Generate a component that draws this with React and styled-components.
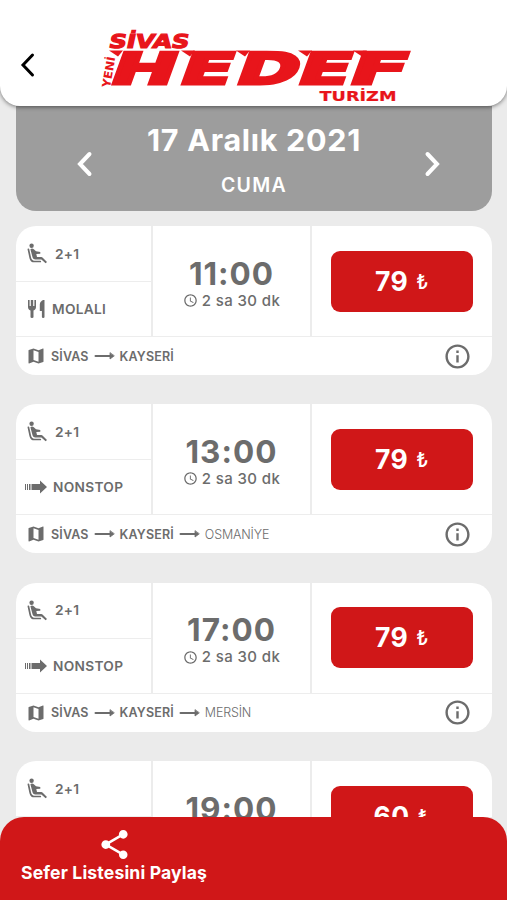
import React from "react";
import styled, { createGlobalStyle } from "styled-components";
import { MdMap, MdAccessTime, MdInfoOutline, MdShare } from "react-icons/md";

const GlobalStyle = createGlobalStyle`
	*{
		box-sizing: border-box;
	}
	body{
		margin: 0;
		background: #ebebeb;
		font-family: Inter, "Liberation Sans", sans-serif;
		color: #6c6c6c;
	}
`

const Screen = styled.div`
	height: 900px;
	overflow: hidden;
	display: flex;
	flex-direction: column;
	background: #ebebeb;
`

const Header = styled.header`
	height: 106px;
	flex: none;
	display: flex;
	align-items: flex-end;
	background: #fff;
	border-radius: 0 0 20px 20px;
	box-shadow: 0 1px 4px rgba(0, 0, 0, 0.5);
	z-index: 1;
`

const BackButton = styled.button`
	display: flex;
	padding: 0;
	margin: 0 0 28px 20px;
	border: none;
	background: none;
	color: #000;
`

const Logo = styled.svg`
	margin: 0 0 3px 62px;
	fill: #e8151b;
	stroke: #e8151b;
	font-family: "DejaVu Sans", sans-serif;
	font-weight: 700;
`

const Content = styled.main`
	flex: 1;
	min-height: 0;
	overflow: hidden;
	padding: 0 15px 0 16px;
`

const DateBar = styled.div`
	height: 105px;
	display: grid;
	grid-template-columns: 16px 1fr 16px;
	align-items: center;
	padding: 10px 52px 0 61px;
	background: #9d9d9d;
	border-radius: 0 0 20px 20px;
	color: #fff;
`

const DateText = styled.div`
	display: grid;
	justify-items: center;
	gap: 15px;
	padding: 0 9px 8px 0;
	h1{
		margin: 0;
		font-size: 30.5px;
		line-height: 36px;
		font-weight: 700;
		letter-spacing: 0.7px;
	}
	h2{
		margin: 0;
		font-size: 19.5px;
		line-height: 24px;
		font-weight: 600;
		letter-spacing: 1.3px;
	}
`

const TripList = styled.div`
	display: grid;
	gap: 29.4px;
	padding-top: 15px;
`

const Card = styled.article`
	height: 149px;
	display: grid;
	grid-template-rows: 111px 1fr;
	background: #fff;
	border-radius: 20px;
	overflow: hidden;
`

const CardTop = styled.div`
	display: grid;
	grid-template-columns: 137px 159px 1fr;
	border-bottom: 1px solid #ededed;
`

const Features = styled.div`
	display: grid;
	grid-template-rows: 56px 1fr;
	border-right: 2px solid #ececec;
`

const Feature = styled.div`
	display: flex;
	align-items: center;
	gap: ${props => props.$wide ? `7px` : `6px`};
	padding-left: ${props => props.$tight ? `9px` : `11px`};
	font-size: 13.7px;
	font-weight: 600;
	letter-spacing: 0.3px;
	&:first-child{
		border-bottom: 1px solid #ededed;
	}
`

const TimeBox = styled.div`
	display: flex;
	flex-direction: column;
	align-items: center;
	justify-content: center;
	padding-top: 5px;
	border-right: 2px solid #ececec;
`

const Time = styled.div`
	font-size: 31.5px;
	line-height: 34px;
	font-weight: 650;
	letter-spacing: 1px;
`

const Duration = styled.div`
	display: flex;
	align-items: center;
	gap: 4px;
	font-size: 15px;
	line-height: 20px;
	font-weight: 500;
	letter-spacing: 0.4px;
`

const PriceBox = styled.div`
	display: flex;
	align-items: center;
	padding-left: 19px;
`

const Price = styled.button`
	display: flex;
	align-items: center;
	justify-content: center;
	gap: 8px;
	width: 142px;
	height: 61px;
	padding: 0 0 1px;
	border: none;
	border-radius: 9px;
	background: #d01718;
	color: #fff;
	font-family: inherit;
	font-size: 26.5px;
	font-weight: 700;
	letter-spacing: 0.5px;
	span{
		font-size: 20px;
		font-weight: 500;
		padding-top: 2px;
	}
`

const Route = styled.div`
	display: flex;
	align-items: center;
	padding: 0 20px 0 10px;
	font-size: 12.5px;
	font-weight: 600;
	> svg:last-child{
		margin-left: auto;
	}
`

const Stop = styled.span`
	margin-left: 5px;
	font-weight: ${props => props.$light ? 300 : 600};
	letter-spacing: ${props => props.$light ? `-0.15px` : `0.15px`};
`

const LongArrow = styled.svg`
	margin-left: 5px;
`

const Footer = styled.footer`
	flex: none;
	height: 83px;
	display: flex;
	align-items: flex-start;
	padding: 10px 21px;
	background: #d01718;
	border-radius: 24px 24px 0 0;
	color: #fff;
	z-index: 1;
`

const ShareButton = styled.button`
	display: grid;
	justify-items: center;
	padding: 0;
	border: none;
	background: none;
	color: inherit;
	font-family: inherit;
	font-size: 17.6px;
	line-height: 22px;
	font-weight: 700;
	letter-spacing: 0.15px;
	white-space: nowrap;
`

const trips = [
	{ time: "11:00", nonstop: false, price: 79, stops: ["SİVAS", "KAYSERİ"] },
	{ time: "13:00", nonstop: true, price: 79, stops: ["SİVAS", "KAYSERİ", "OSMANİYE"] },
	{ time: "17:00", nonstop: true, price: 79, stops: ["SİVAS", "KAYSERİ", "MERSİN"] },
	{ time: "19:00", nonstop: true, price: 60, stops: ["SİVAS", "KAYSERİ"] },
]

// x is the left edge of the letter on the baseline, w its stretched advance,
// tail the left tip of the small wedge above it
const brandLetters = [
	{ char: "H", x: 107, w: 65, tail: 109 },
	{ char: "E", x: 176.5, w: 52, tail: 181 },
	{ char: "D", x: 233, w: 62, tail: 236 },
	{ char: "E", x: 294.5, w: 52, tail: 298 },
	{ char: "F", x: 346, w: 57, tail: 353 },
]

const Chevron = ({ right, width = 4 }) => (
	<svg width="16" height="26" viewBox="0 0 16 26" fill="none" stroke="currentColor" strokeWidth={width} strokeLinecap="round">
		<path d={right ? "M3.5 3 13 13 3.5 23" : "M12.5 3 3 13 12.5 23"} />
	</svg>
)

const Seat = () => (
	<svg width="21" height="21" viewBox="0 0 21 21" fill="currentColor">
		<circle cx="4.600" cy="2.700" r="2.200" />
		<path d="M3.400 6.200Q5 5 6.800 6.200L9 8.300l4.300 0.700v1.800l-4 0.300 0.700 3h4.200q1 0 1.800 0.800l4 4-1.400 1.400-4.200-3.800H8.200q-2 0-2.600-2z" />
		<path d="M1.400 6.300 3.300 15q0.800 3.500 4 3.500h6" fill="none" stroke="currentColor" strokeWidth="1.700" strokeLinecap="round" />
	</svg>
)

const Cutlery = () => (
	<svg width="19" height="20" viewBox="0 0 19 20" fill="currentColor">
		<path d="M1 1h1.600v6h1.200V1h2.400v6h1.200V1H9v7c0 2-1 3-2.500 3.400V18q0 1-1.500 1t-1.500-1v-6.600C2 11 1 10 1 8z" />
		<path d="M17.500 1v17q0 1-1.300 1t-1.300-1v-6H12.800V6c0-3 2-5 4.700-5z" />
	</svg>
)

const FastArrow = () => (
	<svg width="22" height="14" viewBox="0 0 22 14" fill="currentColor">
		<path d="M0 4h1v6H0zM2 4h1v6H2zM4 4h1.500v6H4zM6.500 4H15V0.500L22 7l-7 6.500V10H6.500z" />
	</svg>
)

const RouteArrow = () => (
	<LongArrow width="21" height="10" viewBox="0 0 21 10" fill="none" stroke="currentColor" strokeWidth="2" strokeLinecap="round">
		<path d="M1.500 5H18" />
		<path d="M16 2v6l4-3z" fill="currentColor" strokeWidth="0.8" strokeLinejoin="round" />
	</LongArrow>
)

const BrandLogo = () => (
	<Logo width="314" height="76" viewBox="98 27 314 76">
		<text transform="translate(108 48) skewX(-12)" fontSize="19" strokeWidth="1.2" textLength="80" lengthAdjust="spacingAndGlyphs">SİVAS</text>
		{brandLetters.map(({ char, x, w, tail }) => (
			<g key={x}>
				<text transform={`translate(${x} 83.5) skewX(-20)`} fontSize="43.500" strokeWidth="3" textLength={w} lengthAdjust="spacingAndGlyphs">{char}</text>
				<path d={`M${tail} 50.500h14l-5 6z`} strokeWidth="0" />
			</g>
		))}
		<text transform="translate(110 88) rotate(-80)" fontSize="11.500" strokeWidth="0" textLength="31" lengthAdjust="spacingAndGlyphs">YENİ</text>
		<text x="319.500" y="101" fontSize="13.500" strokeWidth="0.2" textLength="77" lengthAdjust="spacingAndGlyphs">TURİZM</text>
	</Logo>
)

const TripCard = ({ trip }) => (
	<Card>
		<CardTop>
			<Features>
				<Feature $wide>
					<Seat />
					2+1
				</Feature>
				<Feature $tight={trip.nonstop}>
					{trip.nonstop ? <FastArrow /> : <Cutlery />}
					{trip.nonstop ? "NONSTOP" : "MOLALI"}
				</Feature>
			</Features>
			<TimeBox>
				<Time>{trip.time}</Time>
				<Duration>
					<MdAccessTime size={15} />
					2 sa 30 dk
				</Duration>
			</TimeBox>
			<PriceBox>
				<Price>{trip.price}<span>₺</span></Price>
			</PriceBox>
		</CardTop>
		<Route>
			<MdMap size={20} />
			{trip.stops.map((stop, i) => (
				<React.Fragment key={stop}>
					{i > 0 && <RouteArrow />}
					<Stop $light={i === 2}>{stop}</Stop>
				</React.Fragment>
			))}
			<MdInfoOutline size={29} />
		</Route>
	</Card>
)

const App = () => {
	return (
		<Screen>
			<GlobalStyle />
			<Header>
				<BackButton><Chevron width={3} /></BackButton>
				<BrandLogo />
			</Header>
			<Content>
				<DateBar>
					<Chevron />
					<DateText>
						<h1>17 Aralık 2021</h1>
						<h2>CUMA</h2>
					</DateText>
					<Chevron right />
				</DateBar>
				<TripList>
					{trips.map(trip => <TripCard key={trip.time} trip={trip} />)}
				</TripList>
			</Content>
			<Footer>
				<ShareButton>
					<MdShare size={35} />
					Sefer Listesini Paylaş
				</ShareButton>
			</Footer>
		</Screen>
	)
}

export default App
